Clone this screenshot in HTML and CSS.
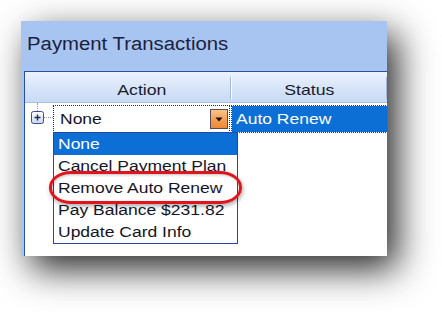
FILE: index.html
```html
<!DOCTYPE html>
<html>
<head>
<meta charset="utf-8">
<link rel="stylesheet" href="styles.css">
</head>
<body>
<div class="stage">
  <div class="window">
    <div class="title"><span class="tx tx-title">Payment Transactions</span></div>
    <div class="frame">
      <div class="grid">
        <div class="ghead">
          <div class="gh-tree"></div>
          <div class="gh-cell gh-action"><span class="tx tx-head">Action</span></div>
          <div class="gh-sep"></div>
          <div class="gh-cell gh-status"><span class="tx tx-head">Status</span></div>
          <div class="gh-sep"></div>
        </div>
        <div class="grow">
          <div class="tree-cell">
            <span class="tree-v"></span>
            <span class="tree-node">
              <svg class="plus" width="13" height="13" viewBox="0 0 13 13">
                <defs>
                  <linearGradient id="pg" x1="0" y1="0" x2="0" y2="1">
                    <stop offset="0" stop-color="#ffffff"/>
                    <stop offset="1" stop-color="#c9d6ef"/>
                  </linearGradient>
                </defs>
                <rect x="0.5" y="0.5" width="12" height="12" rx="2" fill="url(#pg)" stroke="#3a4c8a"/>
                <path d="M3.5 6.5h6M6.5 3.5v6" stroke="#1f2a5a" stroke-width="1.4"/>
              </svg>
              <span class="tree-h"></span>
            </span>
          </div>
          <div class="combo">
            <span class="tx tx-cell">None</span>
            <span class="combo-btn">
              <svg width="8" height="5" viewBox="0 0 8 5"><path d="M0.5 0.5h7l-3.5 4z" fill="#111"/></svg>
            </span>
          </div>
          <div class="status-cell"><span class="tx tx-cell">Auto Renew</span></div>
        </div>
      </div>
    </div>
    <ul class="dropdown">
      <li class="sel"><span class="tx tx-cell">None</span></li>
      <li><span class="tx tx-cell">Cancel Payment Plan</span></li>
      <li><span class="tx tx-cell">Remove Auto Renew</span></li>
      <li><span class="tx tx-cell">Pay Balance $231.82</span></li>
      <li><span class="tx tx-cell">Update Card Info</span></li>
    </ul>
    <div class="ring"></div>
  </div>
</div>
</body>
</html>
```
FILE: styles.css
```css
html, body {
  margin: 0;
  padding: 0;
  background: #ffffff;
}

body {
  font-family: "Liberation Sans", Arial, sans-serif;
  width: 442px;
  height: 312px;
  overflow: hidden;
}

.stage {
  padding: 21px 0 0 21px;
}

.window {
  position: relative;
  width: 366px;
  height: 235px;
  background: #a8c4f1;
  display: flex;
  flex-direction: column;
  box-shadow: 10px 13px 34px rgba(0, 0, 0, 0.85);
  overflow: hidden;
}

.tx {
  display: inline-block;
  white-space: nowrap;
  transform-origin: left center;
}

.title {
  height: 50px;
  box-sizing: border-box;
  padding: 13px 0 0 6px;
  font-size: 18px;
  line-height: 20px;
  color: #1c1f3e;
}

.tx-title {
  transform: scaleX(1.13);
}

.frame {
  flex: 1;
  display: flex;
  padding-left: 3px;
}

.grid {
  flex: 1;
  display: flex;
  flex-direction: column;
  background: #ffffff;
  border-left: 1px solid #2c4e9e;
  border-top: 1px solid #2c4e9e;
}

.ghead {
  height: 31px;
  box-sizing: border-box;
  display: flex;
  background: linear-gradient(#edf3fd, #d6e4f8 55%, #c8daf5);
  border-bottom: 1px solid #a9bee2;
}

.gh-tree {
  width: 28px;
  flex: none;
}

.gh-cell {
  padding-top: 8px;
  line-height: 20px;
  font-size: 15px;
  color: #1a1b2e;
  text-align: center;
  box-sizing: border-box;
  height: 30px;
}

.gh-action {
  width: 177px;
}

.gh-status {
  width: 154px;
}

.tx-head {
  transform-origin: center center;
  transform: scaleX(1.18);
}

.gh-sep {
  width: 2px;
  flex: none;
  margin: 5px 0 3px;
  background: linear-gradient(90deg, #a4b7d8 50%, #ffffff 50%);
}

.grow {
  display: flex;
  height: 30px;
}

.tree-cell {
  width: 28px;
  flex: none;
  box-sizing: border-box;
  padding-left: 6px;
  display: flex;
  flex-direction: column;
}

.tree-v {
  display: block;
  width: 0;
  height: 8px;
  margin-left: 6px;
  border-left: 1px dotted #8597c4;
}

.tree-node {
  display: flex;
  align-items: center;
}

.plus {
  display: block;
  flex: none;
}

.tree-h {
  width: 9px;
  height: 0;
  border-top: 1px dotted #8597c4;
}

.combo {
  width: 177px;
  height: 28px;
  margin-top: 2px;
  box-sizing: border-box;
  border: 1px dotted #2a2a2a;
  background: #ffffff;
  display: flex;
  align-items: center;
  padding-left: 6px;
  font-size: 14px;
  line-height: 26px;
  color: #141428;
}

.combo .tx-cell {
  flex: 1;
}

.combo-btn {
  width: 18px;
  height: 20px;
  box-sizing: border-box;
  margin-right: 1px;
  border: 1px solid #5a4a58;
  background: linear-gradient(#fcc487, #f39a4c 60%, #ee8a38);
  display: flex;
  align-items: center;
  justify-content: center;
}

.combo-btn svg {
  display: block;
}

.status-cell {
  flex: 1;
  height: 28px;
  margin: 2px 0 0 1px;
  box-sizing: border-box;
  border: 1px dotted #3a3a3a;
  background: linear-gradient(#0c6fd6, #0c6fd6) padding-box, #ffffff border-box;
  padding-left: 4px;
  font-size: 14px;
  line-height: 26px;
  color: #ffffff;
}

.tx-cell {
  transform: scaleX(1.25);
}

.dropdown {
  position: absolute;
  left: 32px;
  top: 111px;
  width: 185px;
  margin: 0;
  padding: 0;
  list-style: none;
  box-sizing: border-box;
  border: 1px solid #2447a6;
  background: #ffffff;
  font-size: 14px;
  color: #141428;
}

.dropdown li {
  height: 22px;
  line-height: 22px;
  padding-left: 4px;
}

.dropdown li.sel {
  background: #0c6fd6;
  color: #ffffff;
}

.ring {
  position: absolute;
  left: 28px;
  top: 150px;
  width: 193px;
  height: 33px;
  box-sizing: border-box;
  border: 3px solid #e2131b;
  border-radius: 22px / 16px;
  box-shadow: 1px 2px 4px rgba(0, 0, 0, 0.35), inset 1px 1px 3px rgba(0, 0, 0, 0.25);
}
```
